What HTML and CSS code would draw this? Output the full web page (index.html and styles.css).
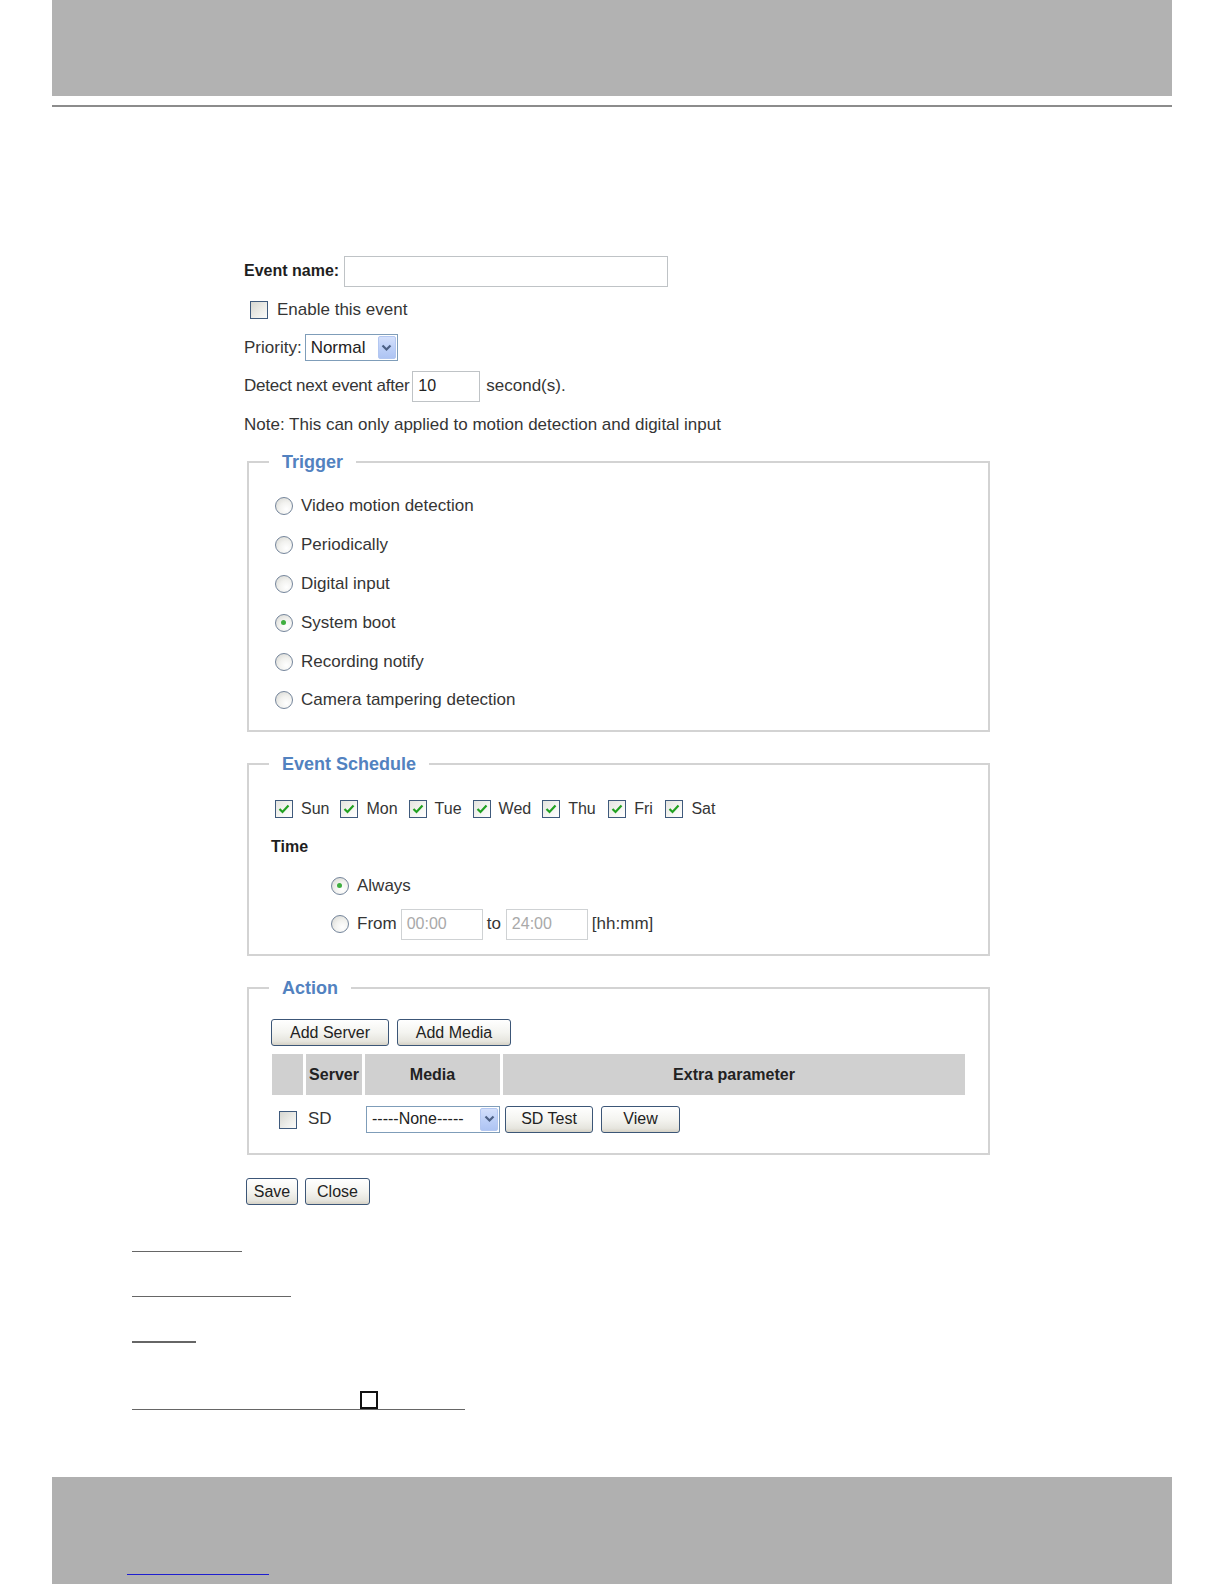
FILE: index.html
```html
<!DOCTYPE html>
<html>
<head>
<meta charset="utf-8">
<title>Event Settings</title>
<link rel="stylesheet" href="styles.css">
</head>
<body>
<div class="page">
  <div class="top-band"></div>
  <div class="top-rule"></div>

  <main class="form">
    <div class="row">
      <span class="lbl-b">Event name:</span>
      <span class="text-input name-input"></span>
    </div>
    <div class="row">
      <span class="check enable-check"></span>
      <span class="after-check">Enable this event</span>
    </div>
    <div class="row">
      <span>Priority:</span>
      <span class="select priority-select"><span class="select-val">Normal</span><span class="select-btn"><svg width="11" height="8" viewBox="0 0 11 8"><polyline points="1.5,1.5 5.5,5.5 9.5,1.5" fill="none" stroke="#4d6185" stroke-width="2.2"/></svg></span></span>
    </div>
    <div class="row">
      <span class="detect-lbl">Detect next event after</span>
      <span class="text-input detect-input">10</span>
      <span class="after-input">second(s).</span>
    </div>
    <div class="row">
      <span>Note: This can only applied to motion detection and digital input</span>
    </div>

    <fieldset class="box trigger">
      <legend>Trigger</legend>
      <div class="opt"><span class="radio"></span><span class="opt-text">Video motion detection</span></div>
      <div class="opt"><span class="radio"></span><span class="opt-text">Periodically</span></div>
      <div class="opt"><span class="radio"></span><span class="opt-text">Digital input</span></div>
      <div class="opt"><span class="radio on"></span><span class="opt-text">System boot</span></div>
      <div class="opt"><span class="radio"></span><span class="opt-text">Recording notify</span></div>
      <div class="opt"><span class="radio"></span><span class="opt-text">Camera tampering detection</span></div>
    </fieldset>

    <fieldset class="box schedule">
      <legend>Event Schedule</legend>
      <div class="row days">
        <span class="day"><span class="check on"><svg width="16" height="16" viewBox="0 0 16 16"><polyline points="3.5,8 6.5,11 12.5,4.5" fill="none" stroke="#21a121" stroke-width="2.2"/></svg></span><span class="day-text">Sun</span></span>
        <span class="day"><span class="check on"><svg width="16" height="16" viewBox="0 0 16 16"><polyline points="3.5,8 6.5,11 12.5,4.5" fill="none" stroke="#21a121" stroke-width="2.2"/></svg></span><span class="day-text">Mon</span></span>
        <span class="day"><span class="check on"><svg width="16" height="16" viewBox="0 0 16 16"><polyline points="3.5,8 6.5,11 12.5,4.5" fill="none" stroke="#21a121" stroke-width="2.2"/></svg></span><span class="day-text">Tue</span></span>
        <span class="day"><span class="check on"><svg width="16" height="16" viewBox="0 0 16 16"><polyline points="3.5,8 6.5,11 12.5,4.5" fill="none" stroke="#21a121" stroke-width="2.2"/></svg></span><span class="day-text">Wed</span></span>
        <span class="day"><span class="check on"><svg width="16" height="16" viewBox="0 0 16 16"><polyline points="3.5,8 6.5,11 12.5,4.5" fill="none" stroke="#21a121" stroke-width="2.2"/></svg></span><span class="day-text">Thu</span></span>
        <span class="day"><span class="check on"><svg width="16" height="16" viewBox="0 0 16 16"><polyline points="3.5,8 6.5,11 12.5,4.5" fill="none" stroke="#21a121" stroke-width="2.2"/></svg></span><span class="day-text">Fri</span></span>
        <span class="day"><span class="check on"><svg width="16" height="16" viewBox="0 0 16 16"><polyline points="3.5,8 6.5,11 12.5,4.5" fill="none" stroke="#21a121" stroke-width="2.2"/></svg></span><span class="day-text">Sat</span></span>
      </div>
      <div class="row time-row"><span class="lbl-b">Time</span></div>
      <div class="row sub-opt"><span class="radio on"></span><span class="opt-text">Always</span></div>
      <div class="row sub-opt">
        <span class="radio"></span><span class="opt-text">From</span>
        <span class="text-input time-input dis">00:00</span>
        <span class="to">to</span>
        <span class="text-input time-input dis to-input">24:00</span>
        <span class="hhmm">[hh:mm]</span>
      </div>
    </fieldset>

    <fieldset class="box action">
      <legend>Action</legend>
      <div class="btn-row">
        <span class="btn add-server">Add Server</span>
        <span class="btn add-media">Add Media</span>
      </div>
      <table class="act-table">
        <tr class="head">
          <th class="c1"></th>
          <th class="c2">Server</th>
          <th class="c3">Media</th>
          <th class="c4">Extra parameter</th>
        </tr>
        <tr class="body-row">
          <td class="c1"><span class="check sd-check"></span></td>
          <td class="c2"><span class="sd">SD</span></td>
          <td class="c3"><span class="select media-select"><span class="select-val">-----None-----</span><span class="select-btn"><svg width="11" height="8" viewBox="0 0 11 8"><polyline points="1.5,1.5 5.5,5.5 9.5,1.5" fill="none" stroke="#4d6185" stroke-width="2.2"/></svg></span></span></td>
          <td class="c4"><span class="btn sd-test">SD Test</span><span class="btn view">View</span></td>
        </tr>
      </table>
    </fieldset>

    <div class="form-btns">
      <span class="btn save">Save</span>
      <span class="btn close">Close</span>
    </div>
  </main>

  <section class="notes">
    <div class="nline l1"></div>
    <div class="nline l2"></div>
    <div class="nline l3"></div>
    <div class="nline l4"><span class="nbox"></span></div>
  </section>

  <footer class="bottom-band">
    <a class="foot-link" href="#"></a>
  </footer>
</div>
</body>
</html>
```

FILE: styles.css
```css
* { box-sizing: border-box; }

body {
  margin: 0;
  background: #fff;
  font-family: "Liberation Sans", Arial, sans-serif;
  font-size: 17px;
  color: #353535;
}

.page { width: 1224px; }

.top-band {
  margin: 0 52px;
  height: 96px;
  background: #b2b2b2;
}

.top-rule {
  margin: 9px 52px 0;
  height: 2px;
  background: #8c8c8c;
}

.form {
  margin: 145px 0 0 244px;
  width: 746px;
}

.row {
  display: flex;
  align-items: center;
  height: 38.4px;
  white-space: nowrap;
}

.lbl-b {
  font-weight: bold;
  font-size: 16px;
  color: #1e1e1e;
}

.text-input {
  display: inline-flex;
  align-items: center;
  height: 31px;
  border: 1px solid #bfc3c6;
  background: #fff;
  padding-left: 5px;
  font-size: 16px;
  color: #222;
}

.name-input { width: 324px; margin-left: 5px; }

.detect-lbl { letter-spacing: -0.25px; }
.detect-input { width: 68px; margin-left: 3px; }
.after-input { margin-left: 6px; }

/* checkbox */
.check {
  display: inline-flex;
  align-items: center;
  justify-content: center;
  width: 18px;
  height: 18px;
  border: 1px solid #3f5a7c;
  background: linear-gradient(135deg, #d6d6d0 0%, #eeeeea 60%, #fbfbf9 100%);
  flex: none;
}
.check.on { background: linear-gradient(135deg, #e4e4df 0%, #f6f6f3 60%, #ffffff 100%); }

.enable-check { margin-left: 6px; }
.after-check { margin-left: 9px; }

/* select */
.select {
  display: inline-flex;
  align-items: center;
  justify-content: space-between;
  height: 27px;
  border: 1px solid #7f9db9;
  background: #fff;
  padding: 0 1px 0 5px;
  flex: none;
}
.select-val { font-size: 17px; color: #222; }
.select-btn {
  display: inline-flex;
  align-items: center;
  justify-content: center;
  width: 18px;
  height: 23px;
  border-radius: 2px;
  background: linear-gradient(180deg, #d4e0fb 0%, #bccff7 55%, #aec4f3 100%);
  border: 1px solid #b3c7f1;
}
.priority-select { width: 93px; margin-left: 3px; }

/* fieldsets */
.box {
  margin: 0 0 0 3px;
  width: 743px;
  border: 2px solid #d3d3d3;
  padding: 0;
}
.box legend {
  margin-left: 20px;
  padding: 0 13px;
  font-size: 18px;
  font-weight: bold;
  line-height: 20px;
  color: #5282c0;
}

.trigger { margin-top: 8px; padding: 15px 0 10px; }

.opt {
  display: flex;
  align-items: center;
  height: 38.8px;
  padding-left: 26px;
}

.radio {
  display: inline-block;
  width: 18px;
  height: 18px;
  border-radius: 50%;
  border: 1.5px solid #74859b;
  background: radial-gradient(circle at 65% 70%, #ffffff 0%, #f2f2ef 45%, #d4d4cf 100%);
  flex: none;
  position: relative;
}
.radio.on::after {
  content: "";
  position: absolute;
  left: 5px;
  top: 5px;
  width: 5px;
  height: 5px;
  border-radius: 50%;
  background: #3fae3f;
}

.opt-text { margin-left: 8px; }

.schedule { margin-top: 22px; padding: 16px 0 11px; }

.days { padding-left: 26px; }
.day { display: inline-flex; align-items: center; margin-right: 11px; }
.day:nth-child(5), .day:nth-child(6) { margin-right: 12.5px; }
.day-text { margin-left: 8px; font-size: 16px; }

.time-row { padding-left: 22px; }

.sub-opt { padding-left: 82px; }

.time-input { width: 82px; margin-left: 4px; color: #a9a9a9; border-color: #cfd2d4; }
.to { margin-left: 4px; }
.to-input { margin-left: 5px; }
.hhmm { margin-left: 4px; }

.action { margin-top: 22px; padding: 21px 0 10px; }

.btn-row {
  display: flex;
  gap: 8px;
  padding-left: 22px;
}

.btn {
  display: inline-flex;
  align-items: center;
  justify-content: center;
  height: 27px;
  border: 1px solid #3c5677;
  border-radius: 3px;
  background: linear-gradient(180deg, #ffffff 0%, #f4f4f0 50%, #e6e5de 85%, #d6d2c6 100%);
  font-size: 16px;
  color: #222;
  flex: none;
}
.add-server { width: 118px; }
.add-media { width: 114px; }

.act-table {
  margin: 5px 0 0 20px;
  border-spacing: 3px;
  border-collapse: separate;
}
.act-table th {
  height: 41px;
  background: #d0d0d0;
  font-size: 16px;
  font-weight: bold;
  color: #222;
  padding: 0;
}
.act-table td { height: 42px; padding: 0; vertical-align: middle; }
.act-table .c1 { width: 31px; }
.act-table .c2 { width: 56px; }
.act-table .c3 { width: 135px; }
.act-table .c4 { width: 462px; }
.act-table td.c2 { padding-left: 2px; }
.act-table td.c1 { padding-left: 7px; line-height: 0; }
.sd-check { vertical-align: middle; margin-top: 2px; }

.media-select { width: 134px; margin-left: 1px; }
.media-select .select-val { font-size: 16px; }

.body-row td.c4 { white-space: nowrap; }
.sd-test { width: 88px; margin-left: 2px; }
.view { width: 79px; margin-left: 8px; }

.form-btns {
  display: flex;
  gap: 7px;
  margin-top: 23px;
  padding-left: 2px;
}
.save { width: 52px; }
.close { width: 65px; }

/* note lines */
.notes { padding-left: 132px; }
.nline { border-bottom: 1px solid #666; }
.l1 { width: 110px; margin-top: 46px; height: 1px; }
.l2 { width: 159px; margin-top: 44px; height: 1px; }
.l3 { width: 64px; margin-top: 44px; height: 1px; border-bottom-width: 2px; }
.l4 {
  width: 333px;
  margin-top: 48px;
  height: 19px;
  display: flex;
  align-items: flex-end;
}
.nbox {
  margin-left: 228px;
  width: 18px;
  height: 18px;
  border: 2px solid #111;
  background: #fff;
}

.bottom-band {
  margin: 67px 52px 0;
  height: 107px;
  background: #b0b0b0;
  padding: 97px 0 0 75px;
}
.foot-link {
  display: block;
  width: 142px;
  height: 1px;
  border-bottom: 1px solid #1e1ed0;
}
```
